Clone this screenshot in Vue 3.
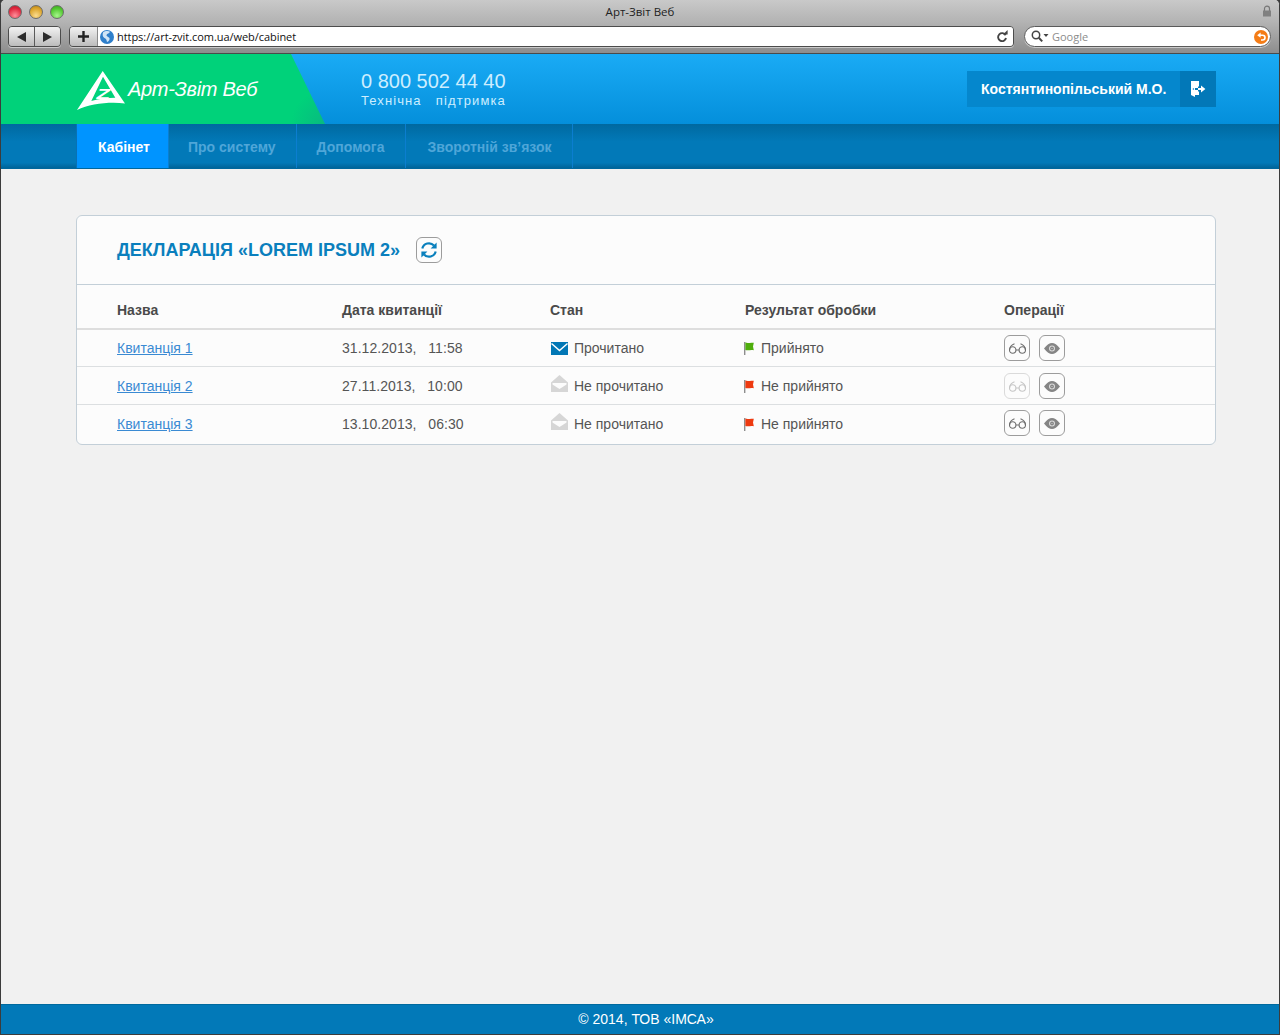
<script setup>
const tabs = [
  { title: 'Кабінет', active: true },
  { title: 'Про систему' },
  { title: 'Допомога' },
  { title: 'Зворотній зв’язок' },
]

const support = 'Технічна   підтримка'

const rows = [
  { name: 'Квитанція 1', date: '31.12.2013,   11:58', read: true, accepted: true, glasses: true },
  { name: 'Квитанція 2', date: '27.11.2013,   10:00', read: false, accepted: false, glasses: false },
  { name: 'Квитанція 3', date: '13.10.2013,   06:30', read: false, accepted: false, glasses: true },
]
</script>

<template>
  <div class="window">
    <div class="chrome">
      <div class="titlebar">
        <div class="lights">
          <span class="light red"></span>
          <span class="light yellow"></span>
          <span class="light green"></span>
        </div>
        <div class="win-title">Арт-Звіт Веб</div>
        <svg class="lock" width="10" height="12" viewBox="0 0 10 12">
          <path d="M2.5 6V3.6a2.5 2.5 0 0 1 5 0V6" fill="none" stroke="#777" stroke-width="1.2" />
          <rect x="1" y="5.5" width="8" height="6" fill="#808080" />
        </svg>
      </div>
      <div class="toolbar">
        <div class="btn-group">
          <div class="tool-btn back"><span class="arrow-left"></span></div>
          <div class="tool-btn"><span class="arrow-right"></span></div>
        </div>
        <div class="address">
          <div class="plus-btn">
            <svg width="11" height="11" viewBox="0 0 11 11"><path d="M5.5 0v11M0 5.5h11" stroke="#222" stroke-width="2.4" /></svg>
          </div>
          <div class="url-box">
            <svg class="globe" width="14" height="14" viewBox="0 0 14 14">
              <circle cx="7" cy="7" r="7" fill="#2f7fcb" />
              <path d="M3 2.500C5 .8 8.500 .6 10 1.800 9.500 3.500 7 3.600 6.500 5 6.200 6.500 8.500 6.800 9.500 8c.6 1.500-1 3.500-2.500 4C6.500 10.500 6.500 9 5 8.300 3.500 7.600 2 6 3 2.500z" fill="#cfe4f6" />
            </svg>
            <span class="url">https://art-zvit.com.ua/web/cabinet</span>
            <svg class="reload" width="12" height="13" viewBox="0 0 12 13">
              <path d="M9.6 5.2A4 4 0 1 0 10 8" fill="none" stroke="#444" stroke-width="1.9" />
              <path d="M7 4.6h4.6V0z" fill="#444" />
            </svg>
          </div>
        </div>
        <div class="search">
          <svg width="18" height="13" viewBox="0 0 18 13">
            <circle cx="5" cy="5" r="3.7" fill="none" stroke="#444" stroke-width="1.5" />
            <path d="M7.8 7.8l3.4 3.6" stroke="#444" stroke-width="2" />
            <path d="M12.5 4h5l-2.5 3z" fill="#444" />
          </svg>
          <span class="search-text">Google</span>
          <span class="snap">
            <svg width="11" height="11" viewBox="0 0 11 11">
              <path d="M3 4.2h3.6a2.4 2.4 0 0 1 0 4.8H5" fill="none" stroke="#fff" stroke-width="1.6" />
              <path d="M4.6 1.4v5.4L1.2 4.2z" fill="#fff" />
            </svg>
          </span>
        </div>
      </div>
    </div>

    <header class="header">
      <div class="brand">
        <svg class="logo-mark" width="50" height="42" viewBox="0 0 50 42">
          <path fill="#fff" fill-rule="evenodd" d="M26.700 1L49 33.500C33 31.500 14 34 1 40ZM27 6.700L15.300 31C23 28.800 32 27.800 39.300 27.700Z" />
          <text class="logo-z" transform="translate(20.500 28.500) scale(1.600 1)">Z</text>
        </svg>
        <span class="logo-text">Арт-Звіт Веб</span>
      </div>
      <div class="phone">
        <div class="phone-num">0 800 502 44 40</div>
        <div class="phone-sub">{{ support }}</div>
      </div>
      <div class="user">
        <span class="user-name">Костянтинопільський М.О.</span>
        <div class="exit">
          <svg width="16" height="16" viewBox="0 0 16 16">
            <path fill="#fff" d="M1 0h8v5.500H8V7H5v2h3v1.500h1V14H5v2l-4-2z" />
            <circle cx="3.400" cy="8" r=".8" fill="#0278b8" />
            <path fill="#fff" d="M8 7h3V4.600L15.400 8 11 11.400V9H8z" />
          </svg>
        </div>
      </div>
    </header>

    <nav class="nav">
      <div class="tabs">
        <div v-for="tab in tabs" :key="tab.title" class="tab" :class="{ active: tab.active }">{{ tab.title }}</div>
      </div>
    </nav>

    <main class="content">
      <section class="card">
        <div class="card-head">
          <h1 class="card-title">ДЕКЛАРАЦІЯ «LOREM IPSUM 2»</h1>
          <div class="op-btn refresh">
            <svg width="18" height="18" viewBox="0 0 18 18">
              <path d="M2.300 7.600A6.800 6.800 0 0 1 14 4.600" fill="none" stroke="#0a80bd" stroke-width="2.200" />
              <path d="M16.600 1.400v6h-6z" fill="#0a80bd" />
              <path d="M15.700 10.400A6.800 6.800 0 0 1 4 13.400" fill="none" stroke="#0a80bd" stroke-width="2.200" />
              <path d="M1.400 16.600v-6h6z" fill="#0a80bd" />
            </svg>
          </div>
        </div>

        <div class="row head">
          <div>Назва</div>
          <div>Дата квитанції</div>
          <div>Стан</div>
          <div>Результат обробки</div>
          <div>Операції</div>
        </div>

        <div v-for="row in rows" :key="row.name" class="row item">
          <div><a class="link">{{ row.name }}</a></div>
          <div class="date">{{ row.date }}</div>
          <div class="cell-icon">
            <svg v-if="row.read" width="17" height="13" viewBox="0 0 17 13">
              <rect width="17" height="13" fill="#0277b5" />
              <path d="M.5 1.500L8.500 8.500 16.500 1.500" fill="none" stroke="#fff" stroke-width="1.500" />
            </svg>
            <svg v-else class="open-mail" width="17" height="17" viewBox="0 0 17 17">
              <path d="M0 7.500L8.500 0 17 7.500V17H0z" fill="#d6d6d6" />
              <path d="M1.500 8h14v1.500L8.500 14 1.500 9.500z" fill="#fcfcfc" />
            </svg>
            <span>{{ row.read ? 'Прочитано' : 'Не прочитано' }}</span>
          </div>
          <div class="cell-icon flag-cell">
            <svg width="10" height="13" viewBox="0 0 10 13">
              <rect width="1.400" height="13" fill="#8d8d8d" />
              <path d="M1.400 .5C4 1.500 6 .2 9.800 .8L9 4.500l.8 3.700C6 7.600 4 8.900 1.400 8z" :fill="row.accepted ? '#4fae0c' : '#ee3a10'" />
            </svg>
            <span>{{ row.accepted ? 'Прийнято' : 'Не прийнято' }}</span>
          </div>
          <div class="ops">
            <div class="op-btn" :class="{ disabled: !row.glasses }">
              <svg width="17" height="11" viewBox="0 0 17 11" fill="none" stroke="currentColor" stroke-width="1.100">
                <circle cx="3.700" cy="7" r="3.200" />
                <circle cx="13.300" cy="7" r="3.200" />
                <path d="M6.900 7h3.200M.6 7C.6 4 2.500 2 5.500 .8M16.400 7C16.400 4 14.500 2 11.500 .8" />
              </svg>
            </div>
            <div class="op-btn">
              <svg width="16" height="11" viewBox="0 0 16 11">
                <path d="M0 5.500C3 1.500 5.500 0 8 0s5 1.500 8 5.500C13 9.500 10.500 11 8 11S3 9.500 0 5.500z" fill="#858585" />
                <circle cx="8" cy="5.500" r="3" fill="#dcdcdc" />
                <circle cx="8" cy="5.500" r="1.900" fill="#858585" />
                <circle cx="8" cy="5.500" r=".6" fill="#dcdcdc" />
              </svg>
            </div>
          </div>
        </div>
      </section>
    </main>

    <footer class="footer">© 2014, ТОВ «ІМСА»</footer>
  </div>
</template>

<style>
html, body {
  margin: 0;
  background: #3c3c3c;
}
</style>

<style scoped>
.window {
  height: 1035px;
  box-sizing: border-box;
  border: 1px solid #3c3c3c;
  border-top: 0;
  border-radius: 5px 5px 0 0;
  display: flex;
  flex-direction: column;
  font-family: "Liberation Sans", Arial, sans-serif;
  font-size: 14px;
  color: #555;
  background: #f1f1f1;
  overflow: hidden;
}

.chrome {
  height: 53px;
  margin: 0 -1px;
  background: linear-gradient(#c9c9c9, #b4b4b4 40%, #8d8d8d);
  border-bottom: 1px solid #4a4a4a;
  border-radius: 5px 5px 0 0;
  flex: none;
}

.titlebar {
  height: 25px;
  box-sizing: border-box;
  padding: 5px 8px 0;
  position: relative;
}

.lights {
  display: flex;
  gap: 7px;
}

.light {
  width: 14px;
  height: 14px;
  border-radius: 50%;
  box-sizing: border-box;
  border: 1px solid #6d6d6d;
}

.red { background: radial-gradient(circle at 50% 80%, #ff8f9a, #e0263d 65%, #b01a2a); }
.yellow { background: radial-gradient(circle at 50% 80%, #fbdc8f, #dba328 65%, #a97a18); }
.green { background: radial-gradient(circle at 50% 80%, #a5f58b, #4fc62d 65%, #3a9a20); }

.win-title {
  position: absolute;
  left: 0;
  right: 0;
  top: 4px;
  text-align: center;
  font-family: "Open Sans", sans-serif;
  font-size: 11.500px;
  line-height: 15px;
  color: #222;
}

.lock {
  position: absolute;
  right: 8px;
  top: 5px;
}

.toolbar {
  display: flex;
  align-items: flex-start;
  padding: 1px 9px 0 8px;
}

.btn-group {
  display: flex;
  width: 53px;
  height: 21px;
  box-sizing: border-box;
  border: 1px solid #4c4c4c;
  border-radius: 4px;
  overflow: hidden;
  box-shadow: 0 1px 0 rgba(255, 255, 255, .5);
}

.tool-btn {
  flex: 1;
  display: flex;
  align-items: center;
  justify-content: center;
  background: linear-gradient(#f2f2f2, #bcbcbc);
}

.tool-btn.back {
  border-right: 1px solid #5a5a5a;
}

.arrow-left, .arrow-right {
  width: 0;
  height: 0;
  border-top: 5px solid transparent;
  border-bottom: 5px solid transparent;
}

.arrow-left { border-right: 9px solid #2c2c2c; }
.arrow-right { border-left: 9px solid #2c2c2c; }

.address {
  display: flex;
  width: 945px;
  height: 21px;
  margin-left: 8px;
  box-sizing: border-box;
  border: 1px solid #4c4c4c;
  border-radius: 4px;
  overflow: hidden;
  box-shadow: 0 1px 0 rgba(255, 255, 255, .5);
}

.plus-btn {
  width: 28px;
  display: flex;
  align-items: center;
  justify-content: center;
  background: linear-gradient(#f2f2f2, #bcbcbc);
  border-right: 1px solid #8a8a8a;
  box-sizing: border-box;
}

.url-box {
  flex: 1;
  background: #fff;
  display: flex;
  align-items: center;
  padding: 0 5px 0 2px;
}

.url {
  margin-left: 3px;
  flex: 1;
  font-family: "Open Sans", sans-serif;
  font-size: 11px;
  letter-spacing: -.05px;
  color: #111;
}

.search {
  width: 247px;
  height: 21px;
  margin-left: 10px;
  box-sizing: border-box;
  border: 1px solid #5a5a5a;
  border-radius: 11px;
  background: #fff;
  display: flex;
  align-items: center;
  padding: 0 2px 0 6px;
  box-shadow: 0 1px 0 rgba(255, 255, 255, .5);
}

.search-text {
  flex: 1;
  margin-left: 3px;
  font-family: "Open Sans", sans-serif;
  font-size: 11px;
  color: #8c8c8c;
}

.snap {
  width: 14px;
  height: 14px;
  border-radius: 50%;
  background: #f47c16;
  display: flex;
  align-items: center;
  justify-content: center;
}

.header {
  height: 70px;
  flex: none;
  display: flex;
  align-items: flex-start;
  background: linear-gradient(#1aabf5, #048fdb);
}

.brand {
  width: 324px;
  height: 70px;
  box-sizing: border-box;
  padding: 16px 0 0 75px;
  display: flex;
  align-items: flex-start;
  background: radial-gradient(circle at 324px 70px, #08ba80, #00d27a 34px);
  clip-path: polygon(0 0, 290px 0, 324px 100%, 0 100%);
}

.logo-mark {
  flex: none;
}

.logo-z {
  font-family: "Liberation Sans", sans-serif;
  font-weight: 700;
  font-style: italic;
  font-size: 14px;
  fill: #fff;
}

.logo-text {
  margin: 6px 0 0 2px;
  font-family: "Liberation Sans", sans-serif;
  font-style: italic;
  font-size: 20px;
  line-height: 26px;
  letter-spacing: -.3px;
  color: #fff;
  white-space: nowrap;
}

.phone {
  margin: 15px 0 0 36px;
  color: #cdeeff;
}

.phone-num {
  font-size: 20px;
  line-height: 24px;
}

.phone-sub {
  font-size: 13px;
  line-height: 15px;
  letter-spacing: 1.100px;
  white-space: pre;
}

.user {
  margin: 17px 63px 0 auto;
  width: 249px;
  height: 36px;
  display: flex;
  align-items: center;
  justify-content: space-between;
  background: #0587cd;
}

.user-name {
  margin-left: 14px;
  font-size: 14px;
  font-weight: 700;
  color: #fff;
}

.exit {
  width: 36px;
  height: 36px;
  background: #0278b8;
  display: flex;
  align-items: center;
  justify-content: center;
}

.nav {
  height: 45px;
  flex: none;
  box-sizing: border-box;
  padding-left: 75px;
  background: linear-gradient(#0069a0, #0279b8 40%, #0279b8 88%, #006499);
  border-bottom: 1px solid #00679d;
}

.tabs {
  display: flex;
  height: 44px;
  border-left: 1px solid #0871b5;
}

.tab {
  height: 44px;
  box-sizing: border-box;
  padding: 1px 21px 0 20px;
  line-height: 44px;
  font-weight: 700;
  color: #4fa6d8;
  border-right: 1px solid #0b7ed0;
}

.tab.active {
  padding: 1px 18px 0 21px;
  color: #fff;
  background: #0094ff;
}

.tab:nth-child(2) {
  padding: 1px 20px 0 19px;
}

.tab:nth-child(4) {
  padding: 1px 21px 0 21px;
}

.content {
  flex: 1;
  padding: 46px 63px 0 75px;
}

.card {
  background: #fcfcfc;
  border: 1px solid #c3cfd8;
  border-radius: 6px;
}

.card-head {
  height: 69px;
  box-sizing: border-box;
  border-bottom: 1px solid #c3cfd8;
  padding: 0 40px;
  display: flex;
  align-items: center;
  gap: 16px;
}

.card-title {
  margin: 0;
  font-size: 18px;
  line-height: 24px;
  font-weight: 700;
  color: #0a7fbd;
}

.row {
  display: grid;
  grid-template-columns: 225px 208px 195px 259px 1fr;
  align-items: center;
  padding-left: 40px;
  box-sizing: border-box;
}

.head {
  height: 45px;
  padding-top: 6px;
  border-bottom: 2px solid #dedede;
  font-weight: 700;
  color: #4a4a4a;
}

.item {
  height: 38px;
  padding-top: 1px;
  border-bottom: 1px solid #dcdfe1;
}

.item:nth-child(3) {
  height: 37px;
  padding-top: 0;
}

.item:last-child {
  height: 39px;
  border-bottom: 0;
  padding-top: 0;
  padding-bottom: 1px;
}

.item:last-child .ops {
  margin-top: -2px;
}

.link {
  color: #3a8ad3;
  text-decoration: underline;
}

.date {
  white-space: pre;
  letter-spacing: .05px;
}

.cell-icon {
  display: flex;
  align-items: center;
  gap: 6px;
  margin-left: 1px;
}

.open-mail {
  margin: -6px 0 0;
}

.flag-cell {
  margin-left: -1px;
  gap: 7px;
}

.ops {
  display: flex;
  gap: 9px;
}

.op-btn {
  width: 26px;
  height: 26px;
  box-sizing: border-box;
  border: 1px solid #9c9c9c;
  border-radius: 6px;
  display: flex;
  align-items: center;
  justify-content: center;
  color: #6e6e6e;
  background: #fcfcfc;
}

.op-btn.disabled {
  border-color: #dadada;
  color: #c6c6c6;
}

.footer {
  height: 30px;
  flex: none;
  box-sizing: border-box;
  border-top: 1px solid #006a9f;
  padding-left: 12px;
  background: #0279b8;
  color: #fff;
  line-height: 29px;
  text-align: center;
}
</style>
